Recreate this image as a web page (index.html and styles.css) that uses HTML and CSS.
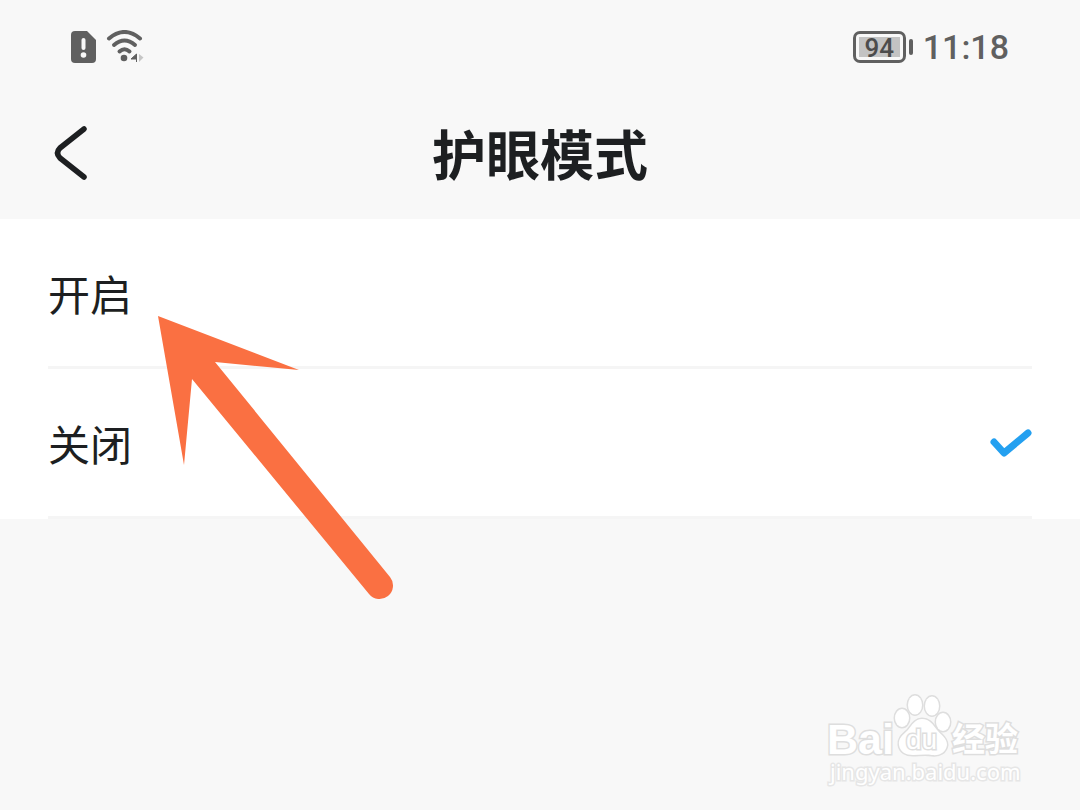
FILE: index.html
```html
<!DOCTYPE html>
<html lang="zh-CN">

<head>
    <meta charset="UTF-8">
    <meta name="viewport" content="width=device-width, initial-scale=1.0">
    <title>护眼模式</title>
    <link rel="stylesheet" href="styles.css">
</head>

<body>
    <div class="status-bar">
        <div class="status-left">
            <svg class="sim-icon" width="26" height="32" viewBox="0 0 26 32" aria-hidden="true">
                <path d="M4 0H16L25 9V28Q25 32 21 32H4Q0 32 0 28V4Q0 0 4 0Z" fill="#606060"/>
                <path d="M12.500 9V17" stroke="#f8f8f8" stroke-width="4" stroke-linecap="round"/>
                <circle cx="12.500" cy="24" r="2.800" fill="#f8f8f8"/>
            </svg>
            <svg class="wifi-icon" width="40" height="34" viewBox="0 0 40 34" aria-hidden="true">
                <g fill="none" stroke="#606060" stroke-width="4" stroke-linecap="round">
                    <path d="M3 8.500Q18.500 -4.500 34 8.500"/>
                    <path d="M8 15Q18.500 6 29 15"/>
                    <path d="M13.500 21.500Q18.500 17 23.500 21.500"/>
                </g>
                <circle cx="18" cy="28" r="3.300" fill="#606060"/>
                <path d="M30.500 24V32M30.500 24L25 29H31" fill="#606060" stroke="#606060"/>
                <path d="M33 24L37.500 27.500L33 32Z" fill="#c6c6c6"/>
            </svg>
        </div>
        <div class="status-right">
            <div class="battery"><span class="battery-level">94</span></div>
            <span class="battery-tip"></span>
            <span class="time">11:18</span>
        </div>
    </div>

    <header class="header">
        <button type="button" class="back-btn" aria-label="返回">
            <svg width="36" height="58" viewBox="0 0 36 58" aria-hidden="true">
                <path d="M32 5L8 24Q3 29 8 34L32 53" fill="none" stroke="#1d1f21" stroke-width="5.500" stroke-linecap="round" stroke-linejoin="round"/>
            </svg>
        </button>
        <h1>护眼模式</h1>
    </header>

    <form class="options">
        <label class="option">
            <span>开启</span>
            <input type="radio" name="eyeMode" value="on">
            <svg class="check" width="42" height="30" viewBox="0 0 42 30" aria-hidden="true">
                <path d="M4 14L14 25L38 5"/>
            </svg>
        </label>
        <label class="option">
            <span>关闭</span>
            <input type="radio" name="eyeMode" value="off" checked>
            <svg class="check" width="42" height="30" viewBox="0 0 42 30" aria-hidden="true">
                <path d="M4 14L14 25L38 5"/>
            </svg>
        </label>
    </form>

    <svg class="arrow" width="240" height="286" viewBox="0 0 240 286" aria-hidden="true">
        <path d="M0 0L141 54L57 46L232 261A13.500 13.500 0 0 1 211 278L34 63L26 149Z" fill="#fa7042"/>
    </svg>

    <svg class="watermark" width="210" height="104" viewBox="0 0 210 104" role="img" aria-label="Baidu经验">
        <g class="mark-shape">
            <ellipse cx="82" cy="28" rx="7" ry="9"/>
            <ellipse cx="95" cy="15" rx="7" ry="9.500"/>
            <ellipse cx="112" cy="16" rx="7" ry="9.500"/>
            <ellipse cx="123" cy="32" rx="7" ry="9"/>
            <path d="M102 29C95 29 92 35 88 40C83 45 78 48 79 55C80 62 86 65 93 65C99 65 105 64 112 65C120 66 126 62 127 55C127 48 121 45 117 40C113 35 110 29 102 29Z"/>
        </g>
        <text class="mark-text mark-bold" x="7" y="64">Bai</text>
        <text class="mark-text mark-du" x="86" y="59">du</text>
        <text class="mark-text mark-cn" x="132" y="61">经验</text>
        <text class="mark-text mark-url" x="10" y="90">jingyan.baidu.com</text>
    </svg>
</body>

</html>
```

FILE: styles.css
```css
* {
    box-sizing: border-box;
}

body {
    position: relative;
    min-height: 100vh;
    margin: 0;
    background-color: #f8f8f8;
    color: #1d1f21;
    font-family: "Noto Sans CJK SC", sans-serif;
}

.status-bar {
    display: flex;
    justify-content: space-between;
    align-items: center;
    height: 93px;
    padding: 0 71px;
    color: #606060;
    font-family: Roboto, sans-serif;
}

.status-left,
.status-right {
    display: flex;
    align-items: center;
}

.status-left {
    gap: 9px;
}

.battery {
    width: 53px;
    height: 32px;
    padding: 3px;
    border: 3px solid #606060;
    border-radius: 7px;
}

.battery-level {
    display: block;
    height: 20px;
    background-color: #c3c3c3;
    color: #4c4c4c;
    font-size: 26px;
    font-weight: 500;
    line-height: 22px;
    text-align: center;
}

.battery-tip {
    width: 4px;
    height: 16px;
    margin: 0 10px 0 3px;
    border-radius: 2px;
    background-color: #606060;
}

.time {
    font-size: 34px;
    font-weight: 500;
    line-height: 40px;
}

.header {
    display: grid;
    grid-template-columns: 48px 1fr 48px;
    align-items: center;
    height: 126px;
    padding: 0 52px 6px;
}

.back-btn {
    display: flex;
    padding: 0;
    border: none;
    background: none;
    cursor: pointer;
}

h1 {
    margin: 0;
    font-size: 54px;
    font-weight: 700;
    line-height: 80px;
    text-align: center;
}

.options {
    background-color: #fff;
    padding: 0 48px;
}

.option {
    display: flex;
    align-items: center;
    justify-content: space-between;
    height: 150px;
    border-bottom: 3px solid #f5f5f5;
    font-size: 42px;
    line-height: 60px;
    cursor: pointer;
}

.option input {
    width: 1px;
    height: 1px;
    margin: 0 0 0 auto;
    appearance: none;
}

.check {
    visibility: hidden;
    fill: none;
    stroke: #24a0f0;
    stroke-width: 7px;
    stroke-linecap: round;
    stroke-linejoin: round;
}

.option input:checked + .check {
    visibility: visible;
}

/* pointer drawn over the list */
.arrow {
    position: absolute;
    top: 316px;
    left: 158px;
    pointer-events: none;
}

.watermark {
    position: absolute;
    right: 50px;
    bottom: 16px;
    pointer-events: none;
}

.mark-shape,
.mark-text {
    fill: #fff;
    stroke: #dedede;
    stroke-width: 3px;
    paint-order: stroke;
}

.mark-bold {
    font-family: "Liberation Sans", sans-serif;
    font-size: 43px;
    font-weight: 700;
}

.mark-du {
    font-family: "Liberation Sans", sans-serif;
    font-size: 28px;
}

.mark-cn {
    font-family: "Noto Sans CJK SC", sans-serif;
    font-size: 33px;
    font-weight: 700;
}

.mark-url {
    stroke: #e6e6e6;
    font-family: "Noto Sans", sans-serif;
    font-size: 22px;
}
```
